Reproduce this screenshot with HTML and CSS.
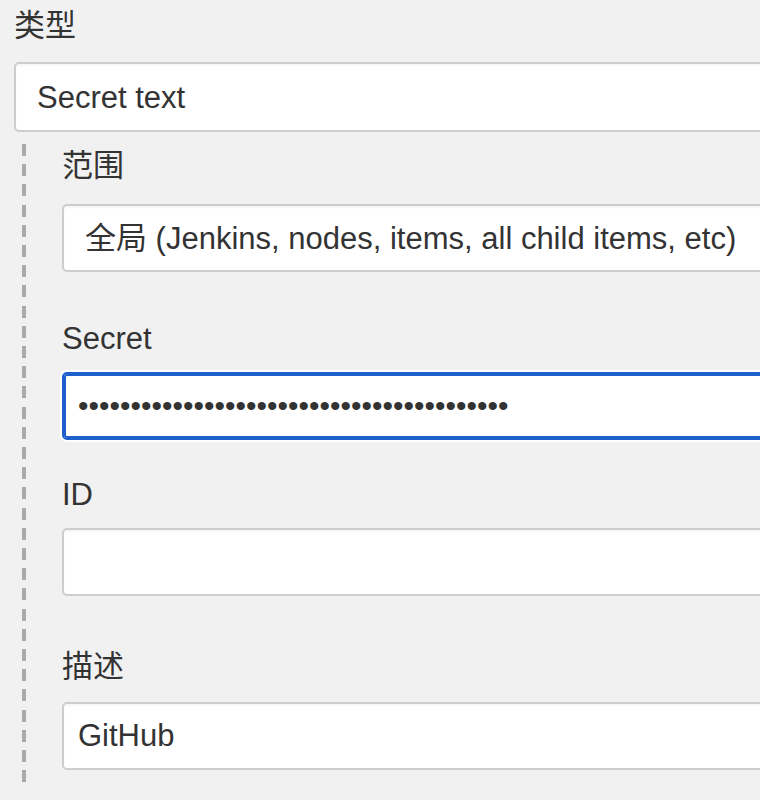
FILE: index.html
```html
<!DOCTYPE html>
<html lang="zh">
<head>
<meta charset="utf-8">
<link rel="stylesheet" href="styles.css">
</head>
<body>
<div class="page">
  <div class="label label-type">类型</div>
  <select class="control control-type"><option>Secret text</option></select>
  <div class="nested">
    <div class="field field-scope">
      <div class="label">范围</div>
      <select class="control control-scope"><option>全局 (Jenkins, nodes, items, all child items, etc)</option></select>
    </div>
    <div class="field field-secret">
      <div class="label">Secret</div>
      <input class="control input focused password" type="password" value="xxxxxxxxxxxxxxxxxxxxxxxxxxxxxxxxxxxxxxxxx">
    </div>
    <div class="field field-id">
      <div class="label">ID</div>
      <input class="control input" type="text" value="">
    </div>
    <div class="field field-desc">
      <div class="label">描述</div>
      <input class="control input" type="text" value="GitHub">
    </div>
  </div>
</div>
</body>
</html>
```

FILE: styles.css
```css
html, body {
  margin: 0;
  padding: 0;
  background: #f1f1f1;
  overflow: hidden;
}
body {
  width: 760px;
  height: 800px;
  font-family: "Liberation Sans", Arial, "Noto Sans CJK SC", sans-serif;
  color: #333;
}
.page {
  padding: 6px 0 0 14px;
}
.label {
  font-size: 31px;
  line-height: 40px;
  height: 40px;
  color: #333;
}
.control {
  display: block;
  box-sizing: border-box;
  width: 820px;
  height: 68px;
  margin: 0;
  border: 2px solid #cdcdcd;
  border-radius: 5px;
  background: #fff;
  box-shadow: inset 0 2px 2px rgba(0, 0, 0, 0.04);
  font-family: "Liberation Sans", Arial, "Noto Sans CJK SC", sans-serif;
  font-size: 31px;
  color: #333;
  -webkit-appearance: none;
  appearance: none;
  outline: none;
}
select.control {
  padding: 0 0 0 21px;
}
.control-type {
  height: 70px;
  margin-top: 16px;
}
.control-scope {
  padding-left: 24px;
}
.input {
  padding: 0 0 0 14px;
}
.password {
  font-size: 30px;
}
.focused {
  border-color: #1c5fcd;
  box-shadow: inset 0 0 0 2px #1c5fcd, 0 0 0 2px #fff;
}
.nested {
  margin: 12px 0 0 8px;
  padding: 0 0 12px 40px;
  background: repeating-linear-gradient(to bottom, #aaaaaa 0 12px, transparent 12px 20.2px) left top / 4px 100% no-repeat;
}
.field .label {
  padding-top: 2px;
  margin-bottom: 15px;
}
.field-scope .label { margin-bottom: 18px; }
.field-secret { margin-top: 45px; }
.field-secret .label { margin-bottom: 13px; }
.field-id { margin-top: 33px; }
.field-id .label { margin-bottom: 13px; }
.field-desc { margin-top: 49px; }
.field-desc .label { margin-bottom: 15px; }
```
